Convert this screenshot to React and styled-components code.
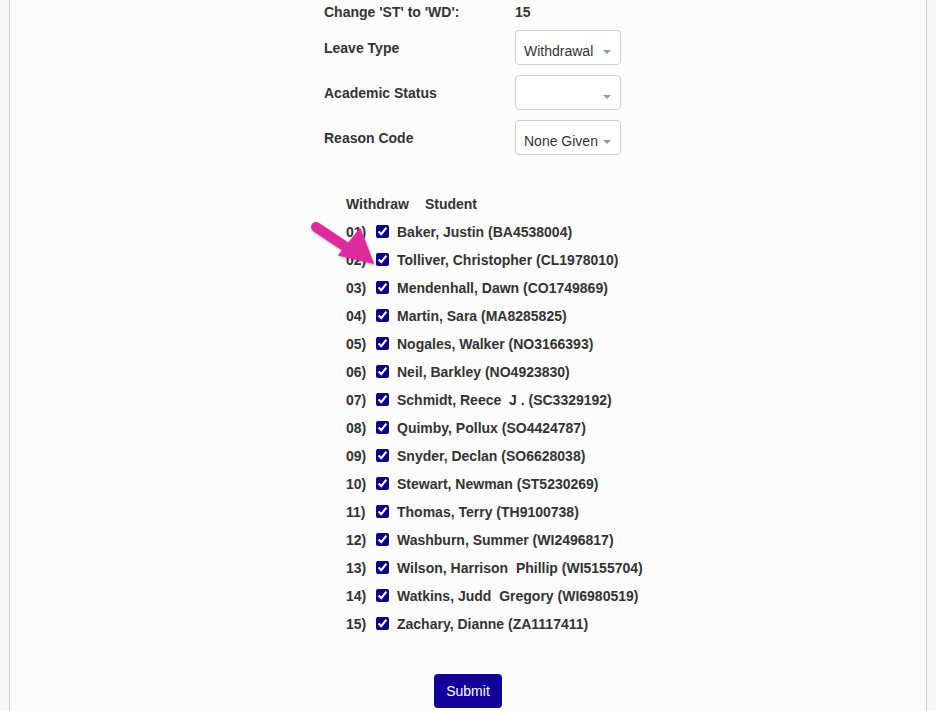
import styled, { createGlobalStyle } from 'styled-components';

const students = [
  'Baker, Justin (BA4538004)',
  'Tolliver, Christopher (CL1978010)',
  'Mendenhall, Dawn (CO1749869)',
  'Martin, Sara (MA8285825)',
  'Nogales, Walker (NO3166393)',
  'Neil, Barkley (NO4923830)',
  'Schmidt, Reece\u00a0 J . (SC3329192)',
  'Quimby, Pollux (SO4424787)',
  'Snyder, Declan (SO6628038)',
  'Stewart, Newman (ST5230269)',
  'Thomas, Terry (TH9100738)',
  'Washburn, Summer (WI2496817)',
  'Wilson, Harrison\u00a0 Phillip (WI5155704)',
  'Watkins, Judd\u00a0 Gregory (WI6980519)',
  'Zachary, Dianne (ZA1117411)',
];

function App() {
  return (
    <>
      <GlobalStyle />
      <S.Panel>
        <S.Content>
          <S.Fields>
            <S.Label>Change 'ST' to 'WD':</S.Label>
            <S.Value>15</S.Value>

            <S.Label $tall>Leave Type</S.Label>
            <S.Select>Withdrawal</S.Select>

            <S.Label $tall>Academic Status</S.Label>
            <S.Select />

            <S.Label $tall>Reason Code</S.Label>
            <S.Select>None Given</S.Select>
          </S.Fields>

          <S.List>
            <S.Header>
              <span>Withdraw</span>
              <span>Student</span>
            </S.Header>
            {students.map((name, i) => (
              <S.Row key={name}>
                <S.Num>{String(i + 1).padStart(2, '0')})</S.Num>
                <S.Check type='checkbox' defaultChecked />
                <S.Name>{name}</S.Name>
              </S.Row>
            ))}
            <S.Arrow width='80' height='60' viewBox='0 0 80 60'>
              <defs>
                <filter id='sh' x='-20%' y='-20%' width='140%' height='140%'>
                  <feDropShadow dx='1' dy='1.5' stdDeviation='1.2' floodOpacity='0.3' />
                </filter>
              </defs>
              <g fill='#de2a9c' stroke='#de2a9c' filter='url(#sh)'>
                <line x1='11' y1='12' x2='44' y2='34' strokeWidth='10' strokeLinecap='round' />
                <polygon points='34,40 55,14 68,48' strokeWidth='1.5' strokeLinejoin='round' />
              </g>
            </S.Arrow>
          </S.List>
        </S.Content>

        <S.Footer>
          <S.Btn>Submit</S.Btn>
        </S.Footer>
      </S.Panel>
    </>
  );
}

// ---------------------------------------- styling ----------------------------------------
const S = {};

const GlobalStyle = createGlobalStyle`
  body {
    margin: 0;
    background: #f6f6f6;
    font-family: 'Liberation Sans', Arial, sans-serif;
    font-size: 14px;
    color: #333;
  }
`;

S.Panel = styled.div`
  margin: 0 9px;
  min-height: 100vh;
  background: #fcfcfc;
  border-left: 1px solid #cfcfcf;
  border-right: 1px solid #cfcfcf;
  box-sizing: border-box;
`;

S.Content = styled.div`
  width: 288px;
  margin: 0 auto;
  padding-top: 4px;
`;

S.Fields = styled.div`
  display: grid;
  grid-template-columns: 191px 106px;
  row-gap: 10px;
  align-items: center;
  line-height: 16px;
`;

S.Label = styled.div`
  font-weight: bold;
  padding-top: ${({ $tall }) => ($tall ? '1px' : '0')};
`;

S.Value = styled.div`
  font-weight: bold;
`;

S.Select = styled.div`
  position: relative;
  height: 35px;
  box-sizing: border-box;
  padding: 12px 20px 0 8px;
  background: #fff;
  border: 1px solid #cfcfcf;
  border-radius: 4px;
  font-weight: normal;
  line-height: 17px;
  white-space: nowrap;

  &::after {
    content: '';
    position: absolute;
    right: 9px;
    top: 19px;
    border-left: 4px solid transparent;
    border-right: 4px solid transparent;
    border-top: 4px solid #999;
  }
`;

S.List = styled.div`
  position: relative;
  margin-top: 35px;
  padding-left: 22px;
  font-weight: bold;
  white-space: nowrap;
`;

S.Header = styled.div`
  display: flex;
  gap: 16px;
  height: 28px;
  align-items: center;
`;

S.Row = styled.div`
  display: flex;
  align-items: center;
  height: 28px;
`;

S.Num = styled.span`
  flex: 0 0 30px;
`;

S.Check = styled.input`
  flex: 0 0 13px;
  width: 13px;
  height: 13px;
  margin: 0 8px 2px 0;
  accent-color: #0c0085;
`;

S.Name = styled.span`
  flex-shrink: 0;
  white-space: pre;
`;

S.Arrow = styled.svg`
  position: absolute;
  left: -19px;
  top: 25px;
  pointer-events: none;
`;

S.Footer = styled.div`
  display: flex;
  justify-content: center;
  padding-top: 36px;
`;

S.Btn = styled.button`
  width: 68px;
  height: 34px;
  border: 0;
  border-radius: 4px;
  background: #11009c;
  color: #fff;
  font-family: 'Liberation Sans', Arial, sans-serif;
  font-size: 14px;
  cursor: pointer;
`;

export default App;
